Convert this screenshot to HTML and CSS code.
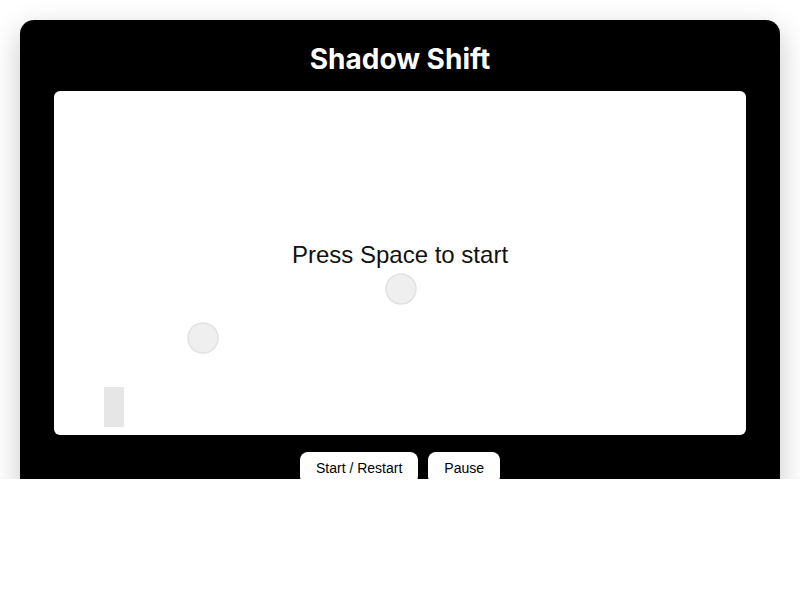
FILE: index.html
```html
<!DOCTYPE html>
<html lang="en">
<head>
<meta charset="utf-8">
<title>Shadow Shift</title>
<link rel="stylesheet" href="styles.css">
</head>
<body>
<div class="viewport">
  <main class="game-card">
    <h1 class="game-title">Shadow Shift</h1>
    <div class="board">
      <svg class="board-canvas" width="692" height="344" viewBox="0 0 692 344">
        <text class="board-msg" x="346" y="166" text-anchor="middle" dominant-baseline="middle">Press Space to start</text>
        <circle class="orb" cx="347" cy="198" r="15"/>
        <circle class="orb" cx="149" cy="247" r="15"/>
        <rect class="player" x="50" y="296" width="20" height="40"/>
      </svg>
    </div>
    <div class="controls">
      <button class="btn" type="button">Start / Restart</button>
      <button class="btn" type="button">Pause</button>
    </div>
  </main>
</div>
</body>
</html>
```
FILE: styles.css
```css
html, body {
  margin: 0;
  padding: 0;
  background: #ffffff;
}

.viewport {
  height: 479px;
  overflow: hidden;
  padding: 20px 20px 0;
  box-sizing: border-box;
}

.game-card {
  background: #000000;
  border-radius: 14px;
  padding: 21px 34px 30px;
  box-shadow: 0 10px 30px rgba(0, 0, 0, 0.22);
  display: flex;
  flex-direction: column;
  align-items: stretch;
}

.game-title {
  margin: 0 0 14px;
  color: #ffffff;
  font-family: Inter, "Liberation Sans", sans-serif;
  font-weight: 700;
  font-size: 28px;
  line-height: 36px;
  text-align: center;
}

.board {
  background: #ffffff;
  border-radius: 6px;
  height: 344px;
  overflow: hidden;
}

.board-canvas {
  display: block;
}

.board-msg {
  font-family: "Liberation Sans", Arial, sans-serif;
  font-size: 24px;
  fill: #111111;
}

.orb {
  fill: #efefef;
  stroke: #e2e2e2;
  stroke-width: 1.5;
}

.player {
  fill: #e6e6e6;
}

.controls {
  display: flex;
  justify-content: center;
  gap: 10px;
  margin-top: 17px;
}

.btn {
  background: #ffffff;
  color: #000000;
  border: none;
  border-radius: 8px;
  padding: 8px 16px;
  font-family: "Liberation Sans", Arial, sans-serif;
  font-size: 14px;
  line-height: 16px;
}
```
